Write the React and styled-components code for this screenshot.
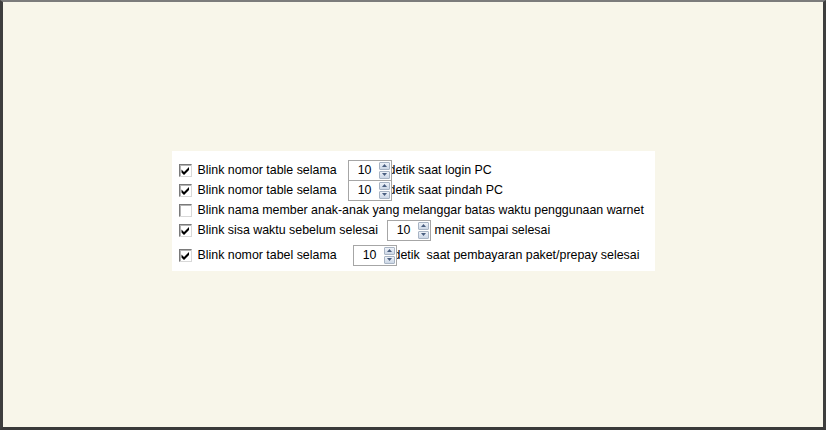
import React from "react";
import styled, { createGlobalStyle } from "styled-components";

const Global = createGlobalStyle`
  html, body { margin: 0; padding: 0; background: #f8f6ea; }
  #root { width: 826px; height: 430px; }
`;

const Frame = styled.div`
  box-sizing: border-box;
  width: 826px;
  height: 430px;
  background: #f8f6ea;
  border-top: 2px solid #7c7c7c;
  border-left: 3px solid #3e3e3e;
  border-right: 3px solid #3e3e3e;
  border-bottom: 3px solid #3a3a3a;
  display: flex;
  flex-direction: column;
  align-items: center;
  padding-top: 149px;
  font-family: "Liberation Sans", Arial, sans-serif;
  font-size: 12.4px;
  color: #000;
`;

const Panel = styled.div`
  box-sizing: border-box;
  width: 483px;
  height: 120px;
  background: #ffffff;
  padding: 9px 0 0 7px;
  display: flex;
  flex-direction: column;
`;

const Row = styled.div`
  display: flex;
  align-items: center;
  height: 20px;
  margin-top: ${(p) => p.$gap || 0}px;
  white-space: nowrap;
`;

const Box = styled.span`
  box-sizing: border-box;
  width: 13px;
  height: 13px;
  border-style: solid;
  border-width: 1px;
  border-color: #7a7a7a #d8d8d8 #d8d8d8 #7a7a7a;
  box-shadow: inset 1px 1px 0 #b4b4b4;
  background: #ffffff;
  margin-right: 6px;
  display: inline-flex;
  align-items: center;
  justify-content: center;
  flex: none;
`;

const Label = styled.span`
  width: ${(p) => (p.$w ? `${p.$w}px` : "auto")};
  flex: none;
`;

const Spinner = styled.span`
  position: relative;
  z-index: 1;
  box-sizing: border-box;
  width: 44px;
  height: 21px;
  border: 1px solid #a6a6a6;
  background: #fff;
  display: flex;
  align-items: center;
  flex: none;
  padding-right: 1px;
`;

const Value = styled.span`
  flex: 1;
  text-align: right;
  padding-right: 7px;
`;

const Buttons = styled.span`
  display: flex;
  flex-direction: column;
  width: 11px;
  height: 17px;
  gap: 1px;
`;

const SpinBtn = styled.span`
  box-sizing: border-box;
  flex: 1;
  border: 1px solid #a8b4c4;
  border-radius: 1px;
  background: linear-gradient(#eef2f8, #ccd7e6);
  display: flex;
  align-items: center;
  justify-content: center;
`;

const Suffix = styled.span`
  margin-left: ${(p) => p.$ml}px;
`;

const Check = () => (
  <svg width="9" height="9" viewBox="0 0 9 9" style={{ marginLeft: 1 }}>
    <path d="M0.5 3.5 L3 6 L8 1 L8 4 L3 9 L0.5 6.5 Z" fill="#000" />
  </svg>
);

const Arrow = ({ down }) => (
  <svg width="5" height="3" viewBox="0 0 5 3">
    <path d={down ? "M0 0 L5 0 L2.5 3 Z" : "M0 3 L5 3 L2.5 0 Z"} fill="#4a5f80" />
  </svg>
);

const Spin = ({ value }) => (
  <Spinner>
    <Value>{value}</Value>
    <Buttons>
      <SpinBtn>
        <Arrow />
      </SpinBtn>
      <SpinBtn>
        <Arrow down />
      </SpinBtn>
    </Buttons>
  </Spinner>
);

const rows = [
  { checked: true, label: "Blink nomor table selama", w: 150, value: "10", suffix: "detik saat login PC", ml: -3 },
  { checked: true, label: "Blink nomor table selama", w: 150, value: "10", suffix: "detik saat pindah PC", ml: -3 },
  { checked: false, label: "Blink nama member anak-anak yang melanggar batas waktu penggunaan warnet" },
  { checked: true, label: "Blink sisa waktu sebelum selesai", w: 189, value: "10", suffix: "menit sampai selesai", ml: 4 },
  { checked: true, label: "Blink nomor tabel selama", w: 155, value: "10", suffix: "detik  saat pembayaran paket/prepay selesai", ml: -3, gap: 5 },
];

export default function App() {
  return (
    <>
      <Global />
      <Frame>
        <Panel>
          {rows.map((r, i) => (
            <Row key={i} $gap={r.gap}>
              <Box>{r.checked && <Check />}</Box>
              <Label $w={r.w}>{r.label}</Label>
              {r.value && <Spin value={r.value} />}
              {r.suffix && <Suffix $ml={r.ml}>{r.suffix.replace("  ", "\u00a0 ")}</Suffix>}
            </Row>
          ))}
        </Panel>
      </Frame>
    </>
  );
}
